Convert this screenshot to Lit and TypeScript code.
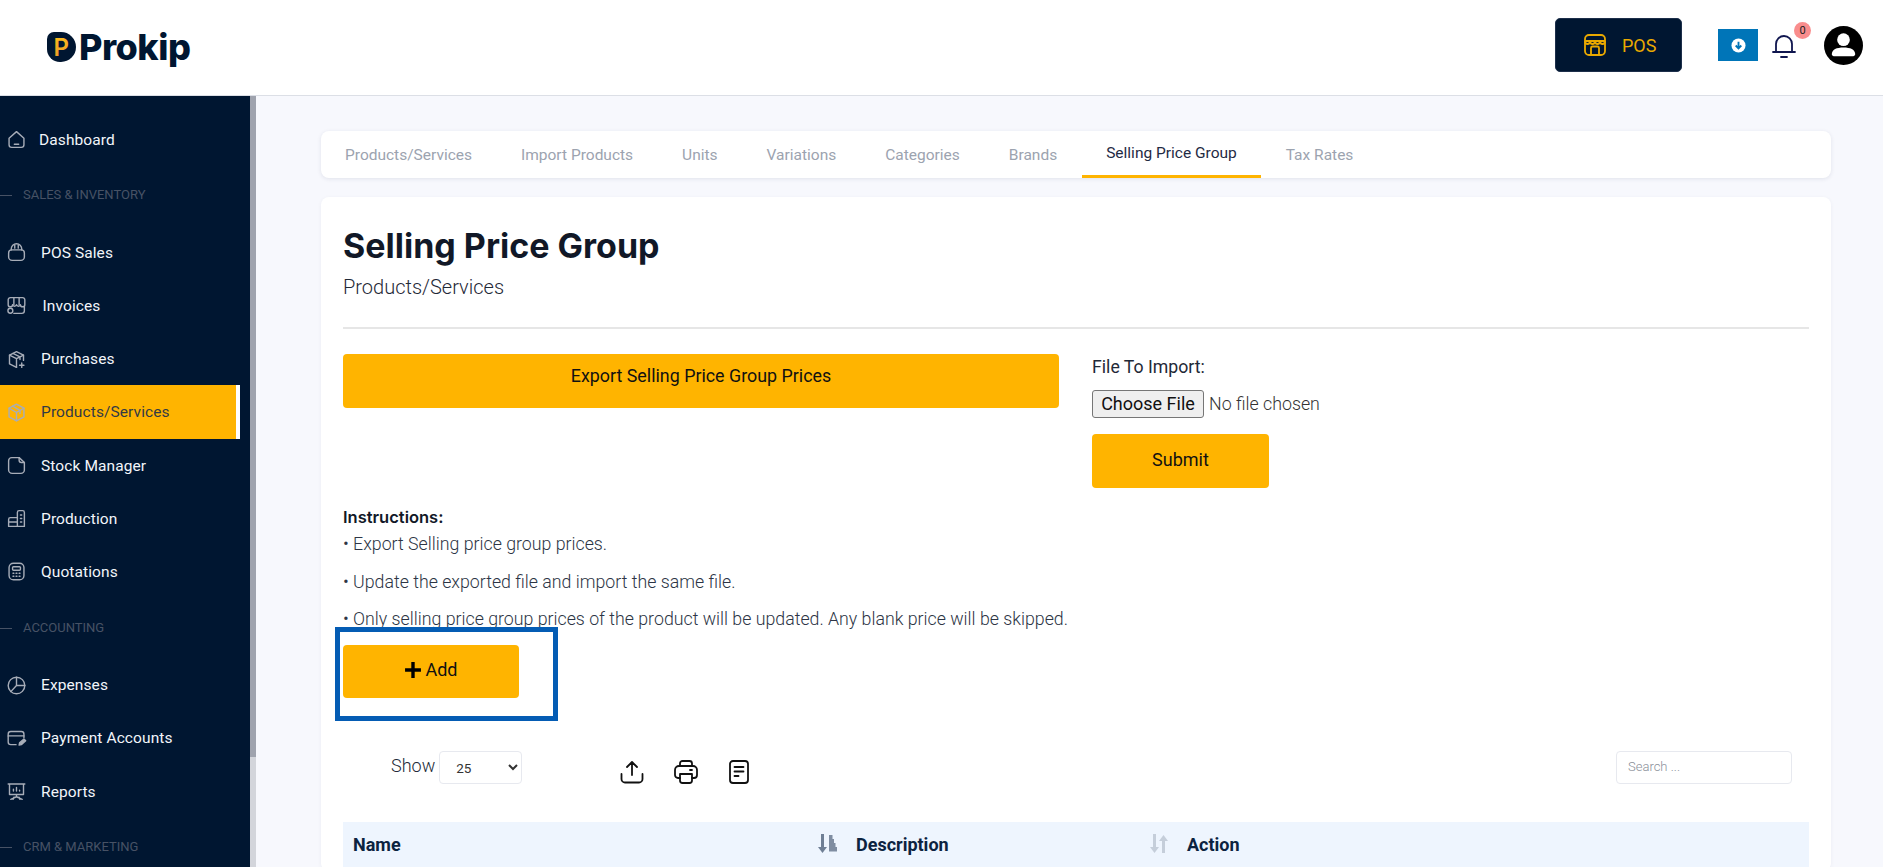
import { LitElement, css, html, svg } from 'lit'
import { customElement } from 'lit/decorators.js'

const sideIcons: Record<string, unknown> = {
  home: svg`<path d="M3.500 10.500 12 3l8.500 7.500V18a3 3 0 0 1-3 3h-11a3 3 0 0 1-3-3z"/><path d="M9.500 17.500h5"/>`,
  bag: svg`<path d="M3 12.500A3.500 3.500 0 0 1 6.500 9h11a3.500 3.500 0 0 1 3.500 3.500V17a4 4 0 0 1-4 4H7a4 4 0 0 1-4-4z"/><path d="M6 9V8a6 6 0 0 1 12 0v1"/><path d="M10 3.500V7M14 3.500V7"/>`,
  store: svg`<path d="M5 3h14a2.500 2.500 0 0 1 2.500 2.500V11a2.500 2.500 0 0 1-5 0 2.300 2.300 0 0 1-4.500 0 2.300 2.300 0 0 1-4.500 0 2.500 2.500 0 0 1-5 0V5.500A2.500 2.500 0 0 1 5 3z"/><path d="M9 3v8M15 3v8M21 13v5a3 3 0 0 1-3 3H9"/><circle cx="5" cy="18" r="2.800"/>`,
  boxPlus: svg`<path d="M12 3 20 7v6M12 3 4 7v10l8 4"/><path d="M4 7l8 4 8-4M12 11v10M8 5l8 4v3"/><path d="M18 16v5M15.500 18.500h5"/>`,
  box: svg`<path d="M12 2.500 20.500 7v10L12 21.500 3.500 17V7z"/><path d="M3.500 7 12 12l8.500-5M12 12v9.500M7.500 4.800l8.500 4.700v3.500"/>`,
  sheet: svg`<path d="M6.500 3H15l6 5.500V17a4 4 0 0 1-4 4H7a4 4 0 0 1-4-4V6.500A3.500 3.500 0 0 1 6.500 3z"/><path d="M15 3v3a2.500 2.500 0 0 0 2.500 2.500H21"/>`,
  building: svg`<path d="M13 21V5a2 2 0 0 1 2-2h4a2 2 0 0 1 2 2v16z"/><path d="M13 11H5a2 2 0 0 0-2 2v8h10M3 16h10M16.500 8h1.500M16.500 12h1.500M16.500 16h1.500"/>`,
  calc: svg`<rect x="3.500" y="2.500" width="17" height="19" rx="5"/><rect x="7.500" y="6.500" width="9" height="4" rx="1"/><path d="M8 14h1M11.500 14h1M15 14h1M8 17.500h1M11.500 17.500h1M15 17.500h1"/>`,
  pie: svg`<circle cx="12" cy="12" r="9.500"/><path d="M12 2.500V12h9.500M12 12l-6.500 7"/>`,
  card: svg`<path d="M20.500 11V7a3 3 0 0 0-3-3h-12a3 3 0 0 0-3 3v9a3 3 0 0 0 3 3h6"/><path d="M2.500 9h18"/><path d="m15 19.500.5-2.500 5-4.500 2 2-5 4.500z" fill="currentColor"/>`,
  board: svg`<path d="M2.500 3.500h19M4 3.500v12h16v-12M12 15.500V18M5.500 21l6.500-3 6.500 3M9 18.500l-1 2.500M15 18.500l1 2.500"/><path d="M8.500 11.500v-2M12 11.500v-4M15.500 11.500v-1"/>`,
}

type NavRow = { label: string; icon?: string; section?: boolean; active?: boolean; x?: number }

const nav: NavRow[] = [
  { label: 'Dashboard', icon: 'home', x: 39 },
  { label: 'SALES & INVENTORY', section: true },
  { label: 'POS Sales', icon: 'bag', x: 41 },
  { label: 'Invoices', icon: 'store', x: 42.5 },
  { label: 'Purchases', icon: 'boxPlus', x: 41 },
  { label: 'Products/Services', icon: 'box', active: true, x: 41 },
  { label: 'Stock Manager', icon: 'sheet', x: 41 },
  { label: 'Production', icon: 'building', x: 41 },
  { label: 'Quotations', icon: 'calc', x: 41 },
  { label: 'ACCOUNTING', section: true },
  { label: 'Expenses', icon: 'pie', x: 41 },
  { label: 'Payment Accounts', icon: 'card', x: 41 },
  { label: 'Reports', icon: 'board', x: 41 },
  { label: 'CRM & MARKETING', section: true },
]

const tabs = ['Products/Services', 'Import Products', 'Units', 'Variations', 'Categories', 'Brands', 'Selling Price Group', 'Tax Rates']

const instructions = [
  'Export Selling price group prices.',
  'Update the exported file and import the same file.',
  'Only selling price group prices of the product will be updated. Any blank price will be skipped.',
]

@customElement('app-root')
export class AppRoot extends LitElement {
  static styles = css`
    :host {
      display: block;
      height: 867px;
      overflow: hidden;
      font-family: Roboto, 'Liberation Sans', sans-serif;
      color: #111827;
      background: #f7f8fd;
    }
    .top {
      height: 95px;
      background: #fff;
      border-bottom: 1px solid #dcdfe6;
      display: flex;
      align-items: center;
      padding: 0 20px 0 47px;
    }
    .logo {
      display: flex;
      align-items: center;
      gap: 3px;
      margin-top: -1px;
    }
    .logo-mark {
      width: 29px;
      height: 30px;
      background: #001631;
      border-radius: 7px 15px 15px 13px;
      display: block;
    }
    .logo-name {
      font-family: Inter, sans-serif;
      font-weight: 800;
      font-size: 36px;
      line-height: 40px;
      letter-spacing: -0.500px;
      color: #001631;
    }
    .top-right {
      margin-left: auto;
      display: flex;
      align-items: center;
      padding-bottom: 5px;
    }
    .pos {
      width: 127px;
      height: 54px;
      box-sizing: border-box;
      background: #001631;
      border: 1px solid #1d2f4b;
      border-radius: 5px;
      color: #eaa900;
      font-size: 18px;
      display: flex;
      align-items: center;
      gap: 15px;
      padding-left: 27px;
    }
    .pos svg {
      width: 24px;
      height: 24px;
      fill: none;
      stroke: currentColor;
      stroke-width: 1.800;
      stroke-linejoin: round;
    }
    .dl {
      width: 40px;
      height: 32px;
      margin-left: 36px;
      background: #0075b8;
      display: grid;
      place-items: center;
    }
    .dl svg {
      width: 15px;
      height: 15px;
      display: block;
    }
    .bell {
      position: relative;
      margin-left: 12px;
      width: 28px;
      height: 28px;
    }
    .bell svg {
      width: 28px;
      height: 28px;
      fill: none;
      stroke: #10164f;
      stroke-width: 1.800;
      stroke-linecap: round;
      display: block;
    }
    .badge {
      position: absolute;
      left: 24px;
      top: -9px;
      width: 17px;
      height: 17px;
      border-radius: 50%;
      background: #f98d8d;
      font-size: 11px;
      line-height: 17px;
      text-align: center;
      color: #222;
    }
    .avatar {
      width: 39px;
      height: 39px;
      margin-left: 26px;
      display: block;
    }
    .body {
      display: flex;
      height: 771px;
    }
    .side {
      width: 250px;
      flex: none;
      background: #001631;
      padding-top: 17px;
      box-sizing: border-box;
      overflow: hidden;
    }
    .item {
      height: 53.200px;
      width: 240px;
      box-sizing: border-box;
      display: flex;
      align-items: center;
      position: relative;
      color: #f2f5fa;
      font-size: 15.500px;
      letter-spacing: 0.100px;
    }
    .item svg {
      position: absolute;
      left: 6px;
      width: 21px;
      height: 21px;
      fill: none;
      stroke: #a7adb8;
      color: #a7adb8;
      stroke-width: 1.600;
      stroke-linecap: round;
      stroke-linejoin: round;
    }
    .item.active {
      height: 54px;
      margin: -0.400px 0;
      background: #ffb400;
      border-right: 4px solid #fff;
      color: #333a45;
    }
    .section {
      height: 60px;
      padding-bottom: 3px;
      box-sizing: border-box;
      display: flex;
      align-items: center;
      gap: 11px;
      color: #475265;
      font-size: 13px;
    }
    .section::before {
      content: '';
      width: 12px;
      height: 1px;
      background: #475265;
      margin-top: 2px;
    }
    .track {
      width: 6px;
      flex: none;
      background: #d3d5db;
    }
    .thumb {
      height: 661px;
      background: #9fa3ae;
    }
    .main {
      flex: 1;
      min-width: 0;
      padding: 35px 52px 0 65px;
    }
    .tabs {
      height: 47px;
      background: #fff;
      border-radius: 8px;
      box-shadow: 0 1px 4px rgba(30, 40, 80, 0.1);
      display: flex;
      overflow: hidden;
    }
    .tab {
      padding: 0 24.500px;
      box-sizing: border-box;
      height: 47px;
      line-height: 48px;
      font-size: 15.500px;
      color: #9ca3af;
    }
    .tab:first-child {
      padding-left: 24px;
    }
    .tab.active {
      color: #1f2a44;
      border-bottom: 3px solid #ffb400;
      line-height: 45px;
    }
    .card {
      margin-top: 19px;
      background: #fff;
      border-radius: 8px;
      padding: 25px 22px 0 22px;
      box-shadow: 0 1px 4px rgba(30, 40, 80, 0.05);
    }
    h1 {
      margin: 0;
      font-family: Inter, sans-serif;
      font-size: 34px;
      line-height: 48px;
      font-weight: 700;
      color: #111827;
    }
    .sub {
      margin-top: 3px;
      font-size: 20px;
      line-height: 28px;
      font-weight: 300;
      color: #1f2937;
    }
    hr {
      margin: 26px 0 25px;
      border: 0;
      height: 2px;
      background: #e6e6e6;
    }
    .form-row {
      display: grid;
      grid-template-columns: 716px 1fr;
      column-gap: 33px;
    }
    button {
      font: inherit;
      border: 0;
      background: #ffb400;
      border-radius: 4px;
      color: #111;
      padding: 0;
    }
    .export {
      height: 54px;
      font-size: 17.850px;
      padding-bottom: 12px;
      align-self: start;
      display: block;
      width: 100%;
    }
    .label {
      font-size: 17.700px;
      line-height: 26px;
      font-weight: 400;
      color: #1f2937;
    }
    input[type='file'] {
      display: block;
      margin-top: 10px;
      height: 28px;
      font: 300 17.800px Roboto, sans-serif;
      color: #333;
    }
    input[type='file']::file-selector-button {
      font: 400 18px Roboto, sans-serif;
      height: 28px;
      width: 112px;
      padding: 0 0 1px;
      margin-right: 5px;
      color: #111;
      background: #efefef;
      border: 1px solid #767676;
      border-radius: 3px;
    }
    .submit {
      display: block;
      margin-top: 16px;
      width: 177px;
      height: 54px;
      font-size: 18px;
      padding-bottom: 4px;
    }
    .ins-title {
      margin-top: 17px;
      font-family: Inter, sans-serif;
      font-size: 16.500px;
      line-height: 24px;
      font-weight: 600;
      color: #111827;
    }
    .ins {
      margin: 0 0 11.500px;
      font-size: 17.750px;
      line-height: 26px;
      font-weight: 300;
      color: #2d3545;
    }
    .ins-title + .ins {
      margin-top: 2px;
    }
    .add-wrap {
      position: relative;
      margin-top: 13.400px;
      width: 176px;
    }
    .add {
      width: 176px;
      height: 53px;
      font-size: 18px;
      display: flex;
      align-items: center;
      justify-content: center;
      gap: 3px;
      padding-bottom: 4px;
    }
    .add svg {
      width: 18px;
      height: 18px;
      stroke: #000;
      stroke-width: 3.200;
      fill: none;
    }
    .frame {
      position: absolute;
      left: -8px;
      top: -18px;
      width: 223px;
      height: 94px;
      box-sizing: border-box;
      border: 5px solid #045cb4;
      pointer-events: none;
    }
    .toolbar {
      margin-top: 53px;
      height: 33px;
      display: flex;
      align-items: flex-start;
      padding: 0 17px 0 48px;
    }
    .show {
      font-size: 18px;
      line-height: 30px;
      font-weight: 300;
      color: #222a38;
    }
    select {
      margin-left: 4px;
      width: 83px;
      height: 33px;
      padding-left: 12px;
      background: #fff;
      border: 1px solid #e7e9ef;
      border-radius: 4px;
      font: 400 13.500px Roboto, sans-serif;
      color: #333;
    }
    .tools {
      display: flex;
      gap: 27px;
      margin: 8px 0 0 98px;
    }
    .tools svg {
      width: 26px;
      height: 26px;
      fill: none;
      stroke: #111;
      stroke-width: 1.800;
      stroke-linecap: round;
      stroke-linejoin: round;
      display: block;
    }
    .search {
      margin-left: auto;
      width: 176px;
      height: 33px;
      box-sizing: border-box;
      border: 1px solid #e7e9ef;
      border-radius: 4px;
      padding: 0 11px 2px;
      font: 300 13px Roboto, sans-serif;
    }
    .search::placeholder {
      color: #8a8f99;
    }
    table {
      margin-top: 38px;
      width: 100%;
      border-collapse: collapse;
      table-layout: fixed;
      background: #eef5fe;
    }
    th {
      height: 45px;
      padding: 0 10px 4px;
      text-align: left;
      font-size: 18px;
      font-weight: 700;
      color: #0c2340;
      position: relative;
    }
    th svg {
      position: absolute;
      right: 8px;
      top: 12px;
      width: 20px;
      height: 20px;
    }
  `

  private _side(name: string) {
    return html`<svg viewBox="0 0 24 24">${sideIcons[name]}</svg>`
  }

  render() {
    return html`
      <header class="top">
        <div class="logo">
          <svg class="logo-mark" viewBox="0 0 29 30">
            <defs>
              <linearGradient id="gold" x1="0" y1="0" x2="0" y2="1">
                <stop offset="0" stop-color="#ffc21a"></stop>
                <stop offset="1" stop-color="#e8952a"></stop>
              </linearGradient>
            </defs>
            <text x="6.500" y="23.500" font-family="Inter, sans-serif" font-size="24" font-weight="600" fill="url(#gold)">P</text>
          </svg>
          <span class="logo-name">Prokip</span>
        </div>
        <div class="top-right">
          <div class="pos">
            <svg viewBox="0 0 24 24">
              <rect x="2" y="2" width="20" height="20" rx="4"></rect>
              <path d="M2 8h20M2 8c0 4 5 4 5 0 0 4 5 4 5 0 0 4 5 4 5 0 0 4 5 4 5 0M8 21v-6a1.500 1.500 0 0 1 1.500-1.500h5A1.500 1.500 0 0 1 16 15v6"></path>
            </svg>
            POS
          </div>
          <div class="dl">
            <svg viewBox="0 0 16 16">
              <circle cx="8" cy="8" r="7.500" fill="#fff"></circle>
              <path d="M8 4v7M5 8l3 3 3-3" fill="none" stroke="#0075b8" stroke-width="2"></path>
            </svg>
          </div>
          <div class="bell">
            <svg viewBox="0 0 28 28">
              <path d="M3 21h22M6 21V13a8 8 0 0 1 16 0v8M11 26h6"></path>
            </svg>
            <span class="badge">0</span>
          </div>
          <svg class="avatar" viewBox="0 0 40 40">
            <circle cx="20" cy="20" r="20" fill="#000"></circle>
            <circle cx="20" cy="14" r="6.500" fill="#fff"></circle>
            <path d="M8 29c0-5 5-7 12-7s12 2 12 7c0 1-1 2-2 2H10c-1 0-2-1-2-2z" fill="#fff"></path>
          </svg>
        </div>
      </header>
      <div class="body">
        <nav class="side">
          ${nav.map((row) =>
            row.section
              ? html`<div class="section">${row.label}</div>`
              : html`<div class="item ${row.active ? 'active' : ''}" style="padding-left:${row.x}px">
                  ${this._side(row.icon!)}${row.label}
                </div>`
          )}
        </nav>
        <div class="track"><div class="thumb"></div></div>
        <main class="main">
          <div class="tabs">
            ${tabs.map((t) => html`<div class="tab ${t === 'Selling Price Group' ? 'active' : ''}">${t}</div>`)}
          </div>
          <section class="card">
            <h1>Selling Price Group</h1>
            <div class="sub">Products/Services</div>
            <hr />
            <div class="form-row">
              <button class="export">Export Selling Price Group Prices</button>
              <div>
                <div class="label">File To Import:</div>
                <input type="file" />
                <button class="submit">Submit</button>
              </div>
            </div>
            <div class="ins-title">Instructions:</div>
            ${instructions.map((line) => html`<p class="ins">• ${line}</p>`)}
            <div class="add-wrap">
              <button class="add">
                <svg viewBox="0 0 17 17"><path d="M8.500 1v15M1 8.500h15"></path></svg>
                Add
              </button>
              <div class="frame"></div>
            </div>
            <div class="toolbar">
              <span class="show">Show</span>
              <select><option>25</option></select>
              <div class="tools">
                <svg viewBox="0 0 26 26">
                  <path d="M12 16V3M7 8l5-5 5 5M1.500 15v5A3.500 3.500 0 0 0 5 23.500h14a3.500 3.500 0 0 0 3.500-3.500v-5"></path>
                </svg>
                <svg viewBox="0 0 26 26">
                  <path d="M7 19H5a3 3 0 0 1-3-3v-5a4 4 0 0 1 4-4h14a4 4 0 0 1 4 4v5a3 3 0 0 1-3 3h-2"></path>
                  <path d="M7 7V4.500A2.500 2.500 0 0 1 9.500 2h7A2.500 2.500 0 0 1 19 4.500V7M7 15h12v6.500a2.500 2.500 0 0 1-2.500 2.500h-7A2.500 2.500 0 0 1 7 21.500zM17 11h2"></path>
                </svg>
                <svg viewBox="0 0 26 26">
                  <rect x="4" y="2" width="18" height="22" rx="3"></rect>
                  <path d="M8.500 8h9M8.500 12.500h9M8.500 17h4"></path>
                </svg>
              </div>
              <input class="search" placeholder="Search ..." />
            </div>
            <table>
              <colgroup>
                <col style="width:503px" />
                <col style="width:331px" />
                <col />
              </colgroup>
              <tr>
                <th>
                  Name
                  <svg viewBox="0 0 20 20">
                    <path d="M4.500 0v14" stroke="#6f7f95" stroke-width="3"></path>
                    <path d="M0 13h9l-4.500 6z" fill="#6f7f95"></path>
                    <path d="M11 1h3.500v4H11zM11 5h5v4h-5zM11 9h6.500v4H11zM11 13h8v4.500h-8z" fill="#7f8da1"></path>
                  </svg>
                </th>
                <th>
                  Description
                  <svg viewBox="0 0 20 20">
                    <path d="M5.500 0v14" stroke="#c5ceda" stroke-width="3"></path>
                    <path d="M1 13h9l-4.500 6z" fill="#c5ceda"></path>
                    <path d="M14.500 19V6" stroke="#c5ceda" stroke-width="3"></path>
                    <path d="M10 7h9l-4.500-6z" fill="#c5ceda"></path>
                  </svg>
                </th>
                <th>Action</th>
              </tr>
            </table>
          </section>
        </main>
      </div>
    `
  }
}
